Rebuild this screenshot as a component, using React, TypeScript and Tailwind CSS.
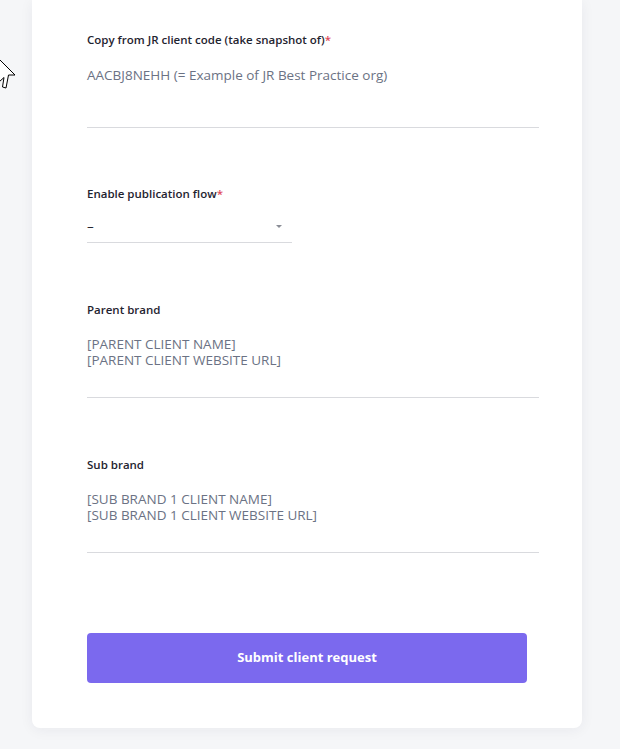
import React from 'react'

const fields = [
  { label: 'Copy from JR client code (take snapshot of)', required: true, lines: ['AACBJ8NEHH (= Example of JR Best Practice org)'] },
  { label: 'Parent brand', required: false, lines: ['[PARENT CLIENT NAME]', '[PARENT CLIENT WEBSITE URL]'] },
  { label: 'Sub brand', required: false, lines: ['[SUB BRAND 1 CLIENT NAME]', '[SUB BRAND 1 CLIENT WEBSITE URL]'] },
]

function Label({ text, required }: { text: string; required?: boolean }) {
  return (
    <div className="h-4 text-[11.5px] leading-4 font-semibold text-[#1f2430]">
      {text}
      {required && <span className="text-[#e0485a]">*</span>}
    </div>
  )
}

function TextField({ label, required, lines }: { label: string; required?: boolean; lines: string[] }) {
  return (
    <div>
      <Label text={label} required={required} />
      <div className={`h-[80px] border-b border-[#d9dade] ${lines.length > 1 ? 'pt-[18px]' : 'pt-[17px]'}`}>
        {lines.map(l => (
          <div key={l} className={`${lines.length > 1 ? 'leading-4' : 'leading-5'} text-[13.5px] text-[#6b7284]`}>{l}</div>
        ))}
      </div>
    </div>
  )
}

export default function App() {
  return (
    <div className="relative min-h-[749px] bg-[#f5f6f8] overflow-hidden" style={{ fontFamily: '"Open Sans", "Noto Sans", sans-serif' }}>
      {/* mouse cursor */}
      <svg className="absolute left-0 top-[45px]" width="20" height="50" viewBox="0 0 20 50">
        <path d="M-10 5 L15 30 L8.5 30 L6 43 L2.5 42 L4 32.5 L-10 45 Z" fill="#fff" stroke="#000" strokeWidth="1" strokeLinejoin="miter" />
      </svg>

      <div className="ml-8 w-[550px] bg-white rounded-b-lg shadow-[0_2px_14px_rgba(30,40,60,0.06)] pl-[55px] pr-[43px] pt-8 pb-[45px]">
        <TextField {...fields[0]} />

        <div className="mt-[58px]">
          <Label text="Enable publication flow" required />
          <div className="w-[205px] h-[41px] border-b border-[#d9dade] pt-[14px] flex items-start justify-between">
            <span className="text-[13.5px] leading-5 text-[#1f2430]">–</span>
            <svg className="mt-[9px] mr-[10px]" width="6" height="4" viewBox="0 0 6 4">
              <path d="M0 0 L6 0 L3 3 Z" fill="#8a8d96" />
            </svg>
          </div>
        </div>

        <div className="mt-[59px]">
          <TextField {...fields[1]} />
        </div>

        <div className="mt-[59px]">
          <TextField {...fields[2]} />
        </div>

        <button className="mt-[80px] w-[440px] h-[50px] rounded bg-[#7b69ee] text-white text-[13px] font-bold">
          Submit client request
        </button>
      </div>
    </div>
  )
}
